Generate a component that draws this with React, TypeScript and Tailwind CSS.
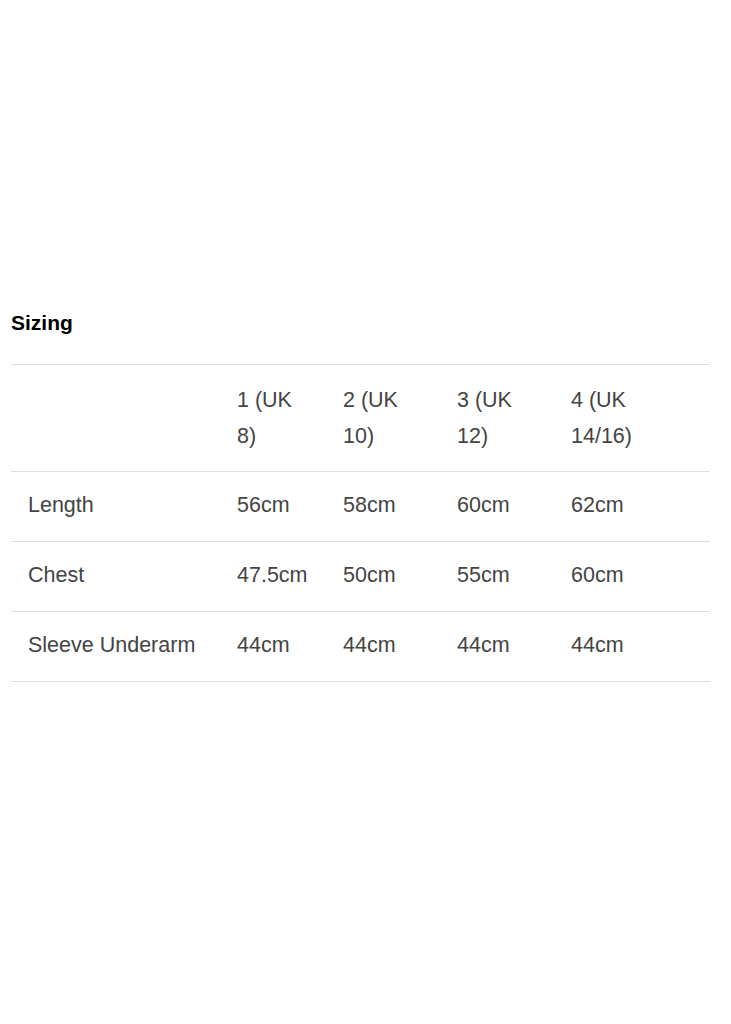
import React from "react";

const cols = "grid grid-cols-[209px_106px_114px_114px_156px]";

const rows: [string, string[]][] = [
  ["Length", ["56cm", "58cm", "60cm", "62cm"]],
  ["Chest", ["47.5cm", "50cm", "55cm", "60cm"]],
  ["Sleeve Underarm", ["44cm", "44cm", "44cm", "44cm"]],
];

const heads: [string, string][] = [
  ["1 (UK", "8)"],
  ["2 (UK", "10)"],
  ["3 (UK", "12)"],
  ["4 (UK", "14/16)"],
];

export default function App() {
  return (
    <div
      className="min-h-[1024px] bg-white pt-[309px] pl-[11px] pr-[21px]"
      style={{ fontFamily: '"Liberation Sans", Arial, sans-serif' }}
    >
      <h2 className="text-[21px] leading-[28px] font-bold text-black">Sizing</h2>
      <div className="mt-[27px] w-[699px] border-b border-[#dedede] text-[21.5px] leading-[36px] text-[#444]">
        <div className={`${cols} border-t border-[#dedede]`}>
          <div className="pt-[17px] pb-[17px] px-[17px]"></div>
          {heads.map(([a, b], i) => (
            <div key={i} className="pt-[17px] pb-[17px] px-[17px]">
              <div>{a}</div>
              <div>{b}</div>
            </div>
          ))}
        </div>
        {rows.map(([label, vals]) => (
          <div key={label} className={`${cols} border-t border-[#dedede]`}>
            <div className="pt-[15px] pb-[18px] px-[17px] whitespace-nowrap">{label}</div>
            {vals.map((v, i) => (
              <div key={i} className="pt-[15px] pb-[18px] px-[17px] whitespace-nowrap">
                {v}
              </div>
            ))}
          </div>
        ))}
      </div>
    </div>
  );
}
